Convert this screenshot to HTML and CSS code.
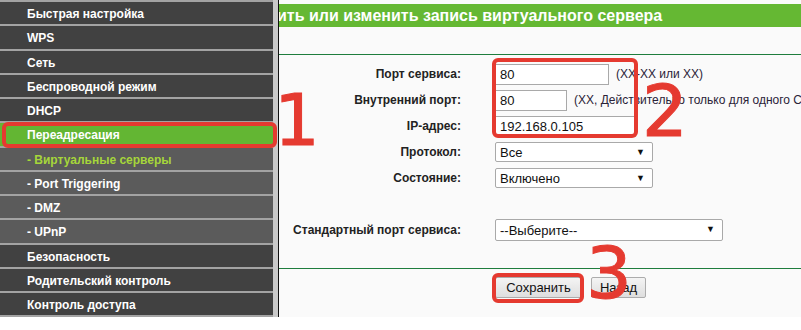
FILE: index.html
```html
<!DOCTYPE html>
<html lang="ru">
<head>
    <meta charset="UTF-8">
    <title>Виртуальные серверы</title>
    <link rel="stylesheet" href="styles.css">
</head>
<body>
    <div class="frame">
        <ul class="menu">
            <li class="menu-item">Быстрая настройка</li>
            <li class="menu-item">WPS</li>
            <li class="menu-item">Сеть</li>
            <li class="menu-item">Беспроводной режим</li>
            <li class="menu-item">DHCP</li>
            <li class="menu-item active">Переадресация</li>
            <li class="menu-item sub current">- Виртуальные серверы</li>
            <li class="menu-item sub">- Port Triggering</li>
            <li class="menu-item sub">- DMZ</li>
            <li class="menu-item sub">- UPnP</li>
            <li class="menu-item">Безопасность</li>
            <li class="menu-item">Родительский контроль</li>
            <li class="menu-item last">Контроль доступа</li>
        </ul>
        <div class="gutter"></div>

        <div class="main">
            <div class="title-wrap">
                <h1 class="title">Добавить или изменить запись виртуального сервера</h1>
            </div>

            <form class="form" action="#" method="POST">
                <div class="form-row">
                    <label for="svcPort">Порт сервиса:</label>
                    <div class="field">
                        <input type="text" id="svcPort" class="input-field w-port" value="80">
                        <span class="hint">(XX-XX или XX)</span>
                    </div>
                </div>
                <div class="form-row">
                    <label for="inPort">Внутренний порт:</label>
                    <div class="field">
                        <input type="text" id="inPort" class="input-field w-small" value="80">
                        <span class="hint">(XX, Действительно только для одного Сервиса)</span>
                    </div>
                </div>
                <div class="form-row">
                    <label for="ipAddr">IP-адрес:</label>
                    <div class="field">
                        <input type="text" id="ipAddr" class="input-field w-ip" value="192.168.0.105">
                    </div>
                </div>
                <div class="form-row">
                    <label for="proto">Протокол:</label>
                    <div class="field">
                        <span class="select-wrap w-select">
                            <select id="proto"><option>Все</option><option>TCP</option><option>UDP</option></select>
                        </span>
                    </div>
                </div>
                <div class="form-row">
                    <label for="state">Состояние:</label>
                    <div class="field">
                        <span class="select-wrap w-select">
                            <select id="state"><option>Включено</option><option>Отключено</option></select>
                        </span>
                    </div>
                </div>

                <div class="form-row std-row">
                    <label for="stdPort">Стандартный порт сервиса:</label>
                    <div class="field">
                        <span class="select-wrap w-wide">
                            <select id="stdPort"><option>--Выберите--</option><option>HTTP</option><option>FTP</option></select>
                        </span>
                    </div>
                </div>

                <div class="buttons">
                    <button type="button" class="btn btn-save">Сохранить</button>
                    <button type="button" class="btn btn-back">Назад</button>
                </div>
            </form>
        </div>
    </div>

    <!-- red marks drawn over the screenshot -->
    <div class="mark mark-menu"></div>
    <div class="mark mark-fields"></div>
    <div class="mark mark-save"></div>
    <span class="num num-1">1</span>
    <span class="num num-2">2</span>
    <span class="num num-3">3</span>
</body>
</html>
```

FILE: styles.css
```css
body {
    margin: 0;
    padding: 0;
    background: #ffffff;
    font-family: 'Liberation Sans', Arial, sans-serif;
    position: relative;
    overflow: hidden;
}

.frame {
    display: flex;
    height: 317px;
}

/* left menu */
.menu {
    list-style: none;
    margin: 0;
    padding: 0;
    width: 273px;
    flex: none;
}

.menu-item {
    box-sizing: content-box;
    height: 19.25px;
    padding: 3px 0 0 27px;
    line-height: 19px;
    border-top: 2px solid #a3a3a3;
    background: #414141;
    color: #ffffff;
    font-size: 12px;
    font-weight: bold;
    white-space: nowrap;
}

.menu-item.last {
    border-bottom: 2px solid #a3a3a3;
}

.menu-item.sub {
    background: #5b5b5b;
}

.menu-item.current {
    color: #a6d63a;
}

.menu-item.active {
    background: #63b633;
}

.gutter {
    width: 5px;
    flex: none;
    background: #c9c9c9;
    border-right: 1px solid #111111;
}

/* right side */
.main {
    flex: 1;
    min-width: 0;
    background: #fafafa;
    overflow: hidden;
}

.title-wrap {
    padding-top: 4px;
    height: 50px;
    border-bottom: 1px solid #1f7d3d;
}

.title {
    margin: 0;
    height: 23px;
    line-height: 23px;
    background: #65b833;
    color: #ffffff;
    font-size: 16px;
    font-weight: bold;
    text-indent: -52px;
    white-space: nowrap;
}

.form {
    padding-top: 6px;
    font-size: 12px;
    color: #222222;
}

.form-row {
    display: grid;
    grid-template-columns: 182px 1fr;
    column-gap: 34px;
    align-items: center;
    height: 26px;
}

.form-row label {
    text-align: right;
    font-weight: bold;
    white-space: nowrap;
}

.field {
    display: flex;
    align-items: center;
    gap: 7px;
    white-space: nowrap;
}

.hint {
    color: #2a2238;
    font-size: 12px;
}

.input-field {
    box-sizing: border-box;
    height: 21px;
    padding: 0 4px;
    margin: 0;
    border: 1px solid #a9a9a9;
    background: #ffffff;
    font-family: 'Liberation Sans', Arial, sans-serif;
    font-size: 13px;
    color: #111111;
}

.w-port {
    width: 114px;
}

.w-small {
    width: 72px;
}

.w-ip {
    width: 141px;
}

.select-wrap {
    position: relative;
    display: block;
}

.select-wrap::after {
    content: "\25BC";
    position: absolute;
    right: 8px;
    top: 5px;
    font-size: 9px;
    color: #111111;
    pointer-events: none;
}

.select-wrap select {
    appearance: none;
    -webkit-appearance: none;
    box-sizing: border-box;
    width: 100%;
    height: 20px;
    margin: 0;
    padding: 0 4px;
    border: 1px solid #a9a9a9;
    border-radius: 2px;
    background: #ffffff;
    font-family: 'Liberation Sans', Arial, sans-serif;
    font-size: 13px;
    color: #111111;
}

.w-select {
    width: 158px;
}

.w-wide {
    width: 228px;
}

.w-wide select {
    height: 22px;
}

.std-row {
    margin-top: 26px;
    padding-bottom: 25px;
    border-bottom: 1px solid #1f7d3d;
    height: 26px;
    box-sizing: content-box;
}

.buttons {
    display: flex;
    gap: 9px;
    padding: 8px 0 0 216px;
}

.btn {
    box-sizing: border-box;
    height: 21px;
    padding: 0;
    border: 1px solid #acacac;
    border-radius: 2px;
    background: linear-gradient(#f4f4f4, #dedede);
    font-family: 'Liberation Sans', Arial, sans-serif;
    font-size: 13px;
    color: #111111;
}

.btn-save {
    width: 87px;
}

.btn-back {
    width: 55px;
}

/* annotations */
.mark {
    position: absolute;
    box-sizing: border-box;
    border: 4px solid #e53a30;
    border-radius: 6px;
}

.mark-menu {
    left: 2px;
    top: 122px;
    width: 275px;
    height: 26px;
}

.mark-fields {
    left: 492px;
    top: 58px;
    width: 146px;
    height: 80px;
}

.mark-save {
    left: 492px;
    top: 273px;
    width: 92px;
    height: 30px;
}

.num {
    position: absolute;
    font-family: 'DejaVu Sans', sans-serif;
    font-size: 72px;
    line-height: 1;
    color: #e53a30;
    -webkit-text-stroke: 1px #e53a30;
}

.num-1 {
    left: 274px;
    top: 84px;
}

.num-2 {
    left: 642px;
    top: 75px;
}

.num-3 {
    left: 586px;
    top: 237px;
}
```
